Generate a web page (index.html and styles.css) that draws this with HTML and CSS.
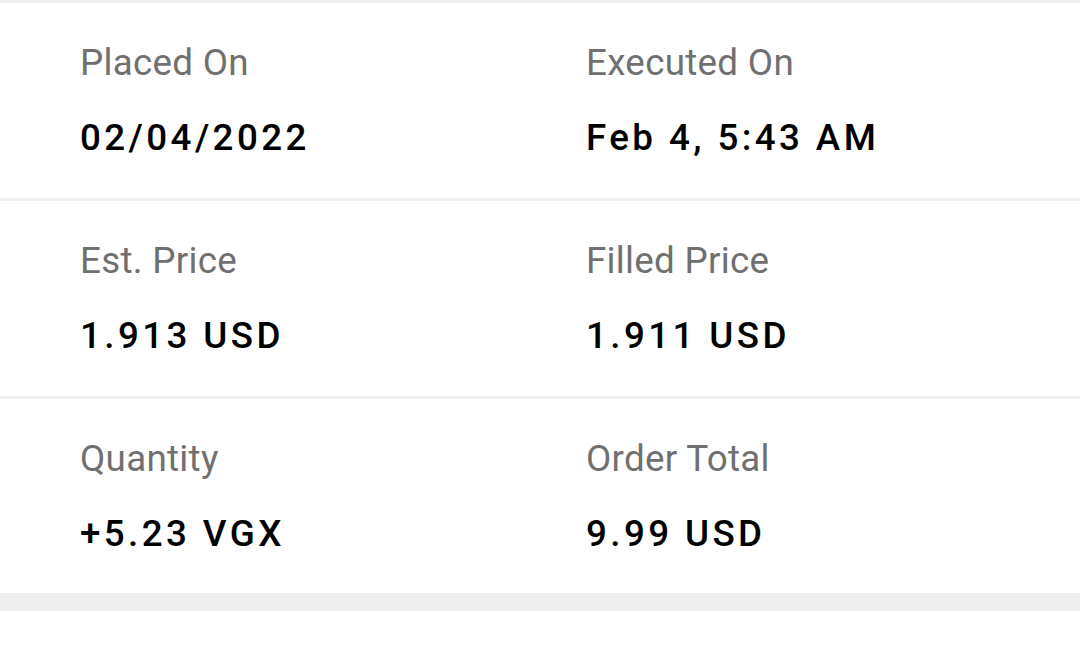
FILE: index.html
```html
<!DOCTYPE html>
<html>
<head>
<meta charset="utf-8">
<link rel="stylesheet" href="styles.css">
</head>
<body>
<div class="details">
  <div class="row">
    <div class="cell"><div class="label">Placed On</div><div class="value">02/04/2022</div></div>
    <div class="cell"><div class="label">Executed On</div><div class="value">Feb 4, 5:43 AM</div></div>
  </div>
  <div class="row">
    <div class="cell"><div class="label">Est. Price</div><div class="value">1.913 USD</div></div>
    <div class="cell"><div class="label">Filled Price</div><div class="value">1.911 USD</div></div>
  </div>
  <div class="row">
    <div class="cell"><div class="label">Quantity</div><div class="value">+5.23 VGX</div></div>
    <div class="cell"><div class="label">Order Total</div><div class="value">9.99 USD</div></div>
  </div>
</div>
<div class="band"></div>
</body>
</html>
```
FILE: styles.css
```css
html, body {
  margin: 0;
  padding: 0;
  background: #ffffff;
  font-family: Roboto, "Liberation Sans", sans-serif;
}
.details {
  border-top: 3px solid #efefef;
}
.row {
  display: grid;
  grid-template-columns: 506px 1fr;
  padding: 38px 0 0 80px;
  height: 157px;
  border-bottom: 3px solid #efefef;
}
.row:last-child {
  border-bottom: none;
  height: 156px;
}
.cell {
  display: flex;
  flex-direction: column;
  gap: 32px;
}
.label {
  font-size: 36.75px;
  line-height: 43px;
  color: #707070;
  letter-spacing: 0.3px;
}
.value {
  font-size: 36.75px;
  line-height: 43px;
  font-weight: 500;
  color: #000000;
  letter-spacing: 3.4px;
}
.band {
  height: 18px;
  background: #efefef;
}
```
